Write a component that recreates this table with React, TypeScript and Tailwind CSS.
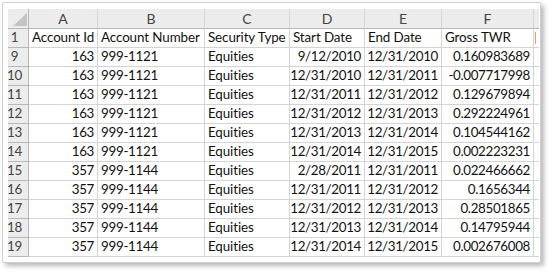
import React from "react";

const rows = [
  ["9", "163", "999-1121", "9/12/2010", "12/31/2010", "0.160983689"],
  ["10", "163", "999-1121", "12/31/2010", "12/31/2011", "-0.007717998"],
  ["11", "163", "999-1121", "12/31/2011", "12/31/2012", "0.129679894"],
  ["12", "163", "999-1121", "12/31/2012", "12/31/2013", "0.292224961"],
  ["13", "163", "999-1121", "12/31/2013", "12/31/2014", "0.104544162"],
  ["14", "163", "999-1121", "12/31/2014", "12/31/2015", "0.002223231"],
  ["15", "357", "999-1144", "2/28/2011", "12/31/2011", "0.022466662"],
  ["16", "357", "999-1144", "12/31/2011", "12/31/2012", "0.1656344"],
  ["17", "357", "999-1144", "12/31/2012", "12/31/2013", "0.28501865"],
  ["18", "357", "999-1144", "12/31/2013", "12/31/2014", "0.14795944"],
  ["19", "357", "999-1144", "12/31/2014", "12/31/2015", "0.002676008"],
];

const cell = "h-[19px] shrink-0 border-r border-b border-[#d4d4d4] flex items-center overflow-hidden whitespace-nowrap";
const L = cell + " justify-start pl-[3px]";
const R = cell + " justify-end pr-[3px] tracking-[-0.35px]";
const rowNum = "h-[19px] w-[21px] shrink-0 border-r border-b border-[#b8b8b8] bg-[#ececec] text-[#444] flex items-center justify-center pr-[7px] tracking-[-0.3px]";

export default function App() {
  return (
    <div className="w-[553px] h-[275px] bg-white relative overflow-hidden" style={{ fontFamily: "Lato, 'Open Sans', sans-serif" }}>
      <div className="ml-[2px] mt-[2px] w-[539px] h-[261px] border border-[#cfcfcf] rounded-[2px] bg-white shadow-[3px_3px_5px_rgba(0,0,0,0.28)] pl-[5px] pt-[6px]">
        <div className="w-[531px] overflow-hidden text-[13.4px] tracking-[-0.1px] leading-none text-[#111]">
          {/* header */}
          <div className="flex">
            <div className="h-[20px] w-[21px] shrink-0 bg-[#ececec] border-r border-b border-[#b8b8b8] relative">
              <svg className="absolute left-[5px] top-[4px]" width="14" height="13" viewBox="0 0 14 13">
                <polygon points="14,0 14,13 0,13" fill="#c4c4c4" />
              </svg>
            </div>
            {[
              ["A", "w-[69px]"],
              ["B", "w-[107px]"],
              ["C", "w-[85px]"],
              ["D", "w-[75px]"],
              ["E", "w-[77px]"],
              ["F", "w-[92px]"],
              ["", "w-[40px]"],
            ].map(([l, w]) => (
              <div key={l + w} className={`h-[20px] ${w} shrink-0 bg-[#ececec] border-r border-b border-r-[#d6d6d6] border-b-[#b8b8b8] flex items-center justify-center text-[#444] text-[14px]`}>
                {l}
              </div>
            ))}
          </div>
          {/* row 1 */}
          <div className="flex">
            <div className={rowNum}>1</div>
            <div className={L + " w-[69px]"}>Account Id</div>
            <div className={L + " w-[107px]"}>Account Number</div>
            <div className={L + " w-[85px]"}>Security Type</div>
            <div className={L + " w-[75px]"}>Start Date</div>
            <div className={L + " w-[77px]"}>End Date</div>
            <div className={L + " w-[92px]"}>Gross TWR</div>
            <div className={cell + " w-[40px] pl-[1px]"}>
              <span className="inline-block w-[1px] h-[12px] bg-[#e9a060]" />
            </div>
          </div>
          {rows.map((r) => (
            <div className="flex" key={r[0]}>
              <div className={rowNum}>{r[0]}</div>
              <div className={R + " w-[69px]"}>{r[1]}</div>
              <div className={L + " w-[107px] tracking-[-0.3px]"}>{r[2]}</div>
              <div className={L + " w-[85px]"}>Equities</div>
              <div className={R + " w-[75px]"}>{r[3]}</div>
              <div className={R + " w-[77px]"}>{r[4]}</div>
              <div className={R + " w-[92px]"}>{r[5]}</div>
              <div className={L + " w-[40px]"}></div>
            </div>
          ))}
        </div>
      </div>
    </div>
  );
}
